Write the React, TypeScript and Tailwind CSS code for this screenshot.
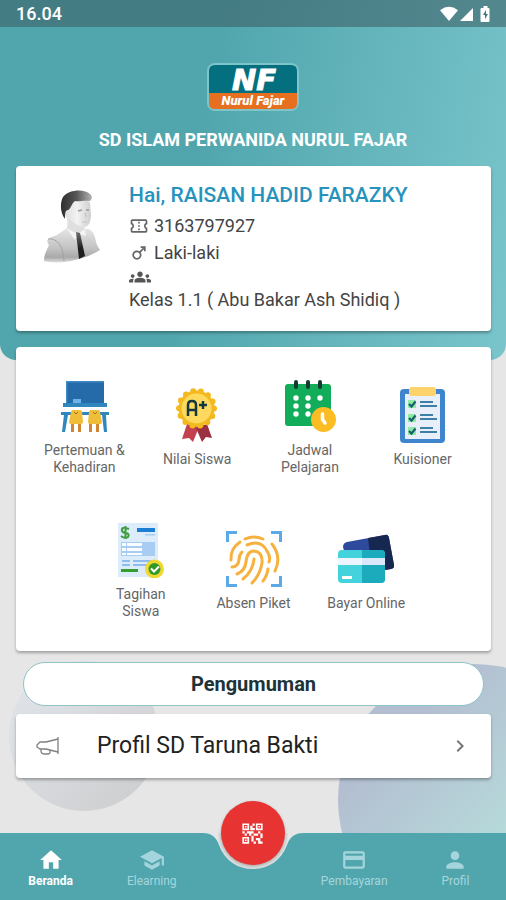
import type { ReactNode } from 'react'
import {
  MdChevronRight,
  MdGroups,
  MdHome,
  MdMale,
  MdOutlineConfirmationNumber,
  MdPayment,
  MdPerson,
  MdQrCode2,
  MdSchool,
} from 'react-icons/md'

function StatusBar() {
  return (
    <div className="h-[27px] bg-[#3b5a60]/55 px-4 flex items-center justify-between text-white">
      <span className="text-lg leading-none font-medium">16.04</span>
      <svg className="w-[52px] h-[18px]" viewBox="0 0 52 18" fill="currentColor" aria-hidden="true">
        <path d="M2 5.200Q11 -1.500 20 5.200L11 16Z" />
        <path d="M35 3V16H22Z" />
        <path d="M43.500 3h2V1h4v2h1q1 0 1 1v12q0 1-1 1h-7q-1 0-1-1V4q0-1 1-1Z" />
        <path d="m48 5-3 5h2v4l3-5h-2Z" fill="#3f777d" />
      </svg>
    </div>
  )
}

function SchoolLogo() {
  return (
    <svg className="w-[92px] h-12" viewBox="0 0 92 48" role="img" aria-label="Logo Nurul Fajar">
      <rect x="0" y="0" width="92" height="48" rx="8" fill="#7fc4c9" />
      <path d="M2 30V8Q2 2 8 2H84Q90 2 90 8V30Z" fill="#04707f" />
      <path d="M2 30H90V40Q90 46 84 46H8Q2 46 2 40Z" fill="#e6701f" />
      <text
        x="47"
        y="27"
        textAnchor="middle"
        className="font-['DejaVu_Sans'] font-bold italic text-[29px]"
        fill="#fff"
        stroke="#fff"
        strokeWidth="1"
      >
        NF
      </text>
      <text x="46" y="42" textAnchor="middle" className="font-black italic text-[13px]" fill="#fff">
        Nurul Fajar
      </text>
    </svg>
  )
}

function Avatar() {
  return (
    <svg className="w-[60px] h-[78px] shrink-0" viewBox="0 0 60 78" role="img" aria-label="Foto siswa">
      <defs>
        <linearGradient id="shirt" x1="0" y1="0" x2="0" y2="1">
          <stop offset="0" stopColor="#e6e6e6" />
          <stop offset=".6" stopColor="#c2c2c2" />
          <stop offset=".85" stopColor="#a9a9a9" />
          <stop offset="1" stopColor="#dedede" />
        </linearGradient>
        <linearGradient id="hair" x1="0" y1="0" x2="1" y2="0">
          <stop offset="0" stopColor="#2e2e2e" />
          <stop offset=".5" stopColor="#565656" />
          <stop offset="1" stopColor="#b4b4b4" />
        </linearGradient>
        <linearGradient id="skin" x1="0" y1="0" x2="1" y2="0">
          <stop offset="0" stopColor="#dcdcdc" />
          <stop offset=".5" stopColor="#f2f2f2" />
          <stop offset="1" stopColor="#cecece" />
        </linearGradient>
        <linearGradient id="tie" x1="0" y1="0" x2="0" y2="1">
          <stop offset="0" stopColor="#707070" />
          <stop offset=".6" stopColor="#1f1f1f" />
        </linearGradient>
      </defs>
      <path d="M2 73C2 66 5 62 7 57C2 51 9 49 15 47L25 40L46 41C53 43 53 51 55 57L58 62C47 69 22 78 2 73Z" fill="url(#shirt)" />
      <path d="M6 51C14 50 21 56 22 73" fill="none" stroke="#a2a2a2" strokeWidth="1" />
      <path d="M24 26C26 34 26 38 24 42L35 48L43 42L41 30Z" fill="#dfdfdf" />
      <path d="M22 21C24 10 45 8 48 15L49 27C49 34 46 39 43 39C35 39 29 32 26 30C22 29 21 24 22 21Z" fill="url(#skin)" />
      <path d="M23 31C18 25 18 14 21 9C27 1 43 1 48 6C51 9 50 11 48 13C42 12 37 14 33 13C29 16 29 21 26 22C23 22 23 26 23 31Z" fill="url(#hair)" />
      <path d="M36 23L40 22M44 22L47 22" stroke="#9a9a9a" strokeWidth="1.500" />
      <path d="M43 25L44 29M40 34L45 34" stroke="#c0c0c0" strokeWidth="1" />
      <path d="M24 40L36 46L33 52ZM36 46L43 41L44 48Z" fill="#f4f4f4" />
      <path d="M34 44L38 45L43 68L37 71Z" fill="url(#tie)" />
    </svg>
  )
}

function ClassroomIcon() {
  return (
    <svg className="size-14" viewBox="0 0 56 56" aria-hidden="true">
      <path d="M10 3H48V26H10Z" fill="#266ba9" />
      <path d="M10 3H48V4.500H11.500V26H10Z" fill="#3f89c5" />
      <path d="M17 21h8v5h-8Z" fill="#6eb2e8" />
      <path d="M7 25H51V29H7Z" fill="#2f87be" />
      <path d="M5 34H53V37H50L51 54H48L46 37H12L9 54H6L8 37H5Z" fill="#2f87be" />
      <path d="M15 43H18V54H15ZM22 43H25V54H22ZM33 43H36V54H33ZM40 43H43V54H40Z" fill="#cf8734" />
      <path d="M15 34Q15 32 17 32H24Q26 32 26 34L27 44Q27 46 25 46H15Q13 46 13 44ZM33 34Q33 32 35 32H42Q44 32 44 34L46 44Q46 46 44 46H34Q32 46 32 44Z" fill="#f0bd38" />
      <path d="m18 34 2 2 2-2M37 34l2 2 2-2" stroke="#9c7624" fill="none" />
    </svg>
  )
}

function GradeIcon() {
  return (
    <svg className="size-14" viewBox="0 0 56 56" aria-hidden="true">
      <path d="m18 37-5 15 7-1 4 4 6-15Z" fill="#c3414f" />
      <path d="m38 37 5 14-6-1-4 5-6-14Z" fill="#9d2f42" />
      <circle cx="27.500" cy="21.500" r="18" fill="#f4b91f" />
      <circle
        cx="27.500"
        cy="21.500"
        r="17.500"
        fill="none"
        stroke="#f4b91f"
        strokeWidth="6"
        strokeDasharray="0 7.854"
        strokeLinecap="round"
      />
      <circle cx="27.500" cy="21.500" r="15" fill="#fdd95e" />
      <path d="M19 29V18Q19 14 23 14T27 18V29M19 23H27M34 14V22M30 18H38" fill="none" stroke="#15383f" strokeWidth="2.500" />
    </svg>
  )
}

function ScheduleIcon() {
  return (
    <svg className="size-14" viewBox="0 0 56 56" aria-hidden="true">
      <rect x="3" y="6" width="46" height="42" rx="3" fill="#12ad5a" />
      <path d="M14 4V9M26 4V9M38 4V9" stroke="#173a30" strokeWidth="4" strokeLinecap="round" />
      <g fill="#fff">
        <circle cx="14" cy="20" r="2.700" />
        <circle cx="26" cy="20" r="2.700" />
        <circle cx="38" cy="20" r="2.700" />
        <circle cx="14" cy="28" r="2.700" />
        <circle cx="26" cy="28" r="2.700" />
        <circle cx="14" cy="36" r="2.700" />
        <circle cx="26" cy="36" r="2.700" />
      </g>
      <circle cx="41.500" cy="41.500" r="12.500" fill="#fbbd24" />
      <path d="M40.500 36V41.500L43 45" fill="none" stroke="#fff" strokeWidth="3.500" strokeLinecap="round" />
    </svg>
  )
}

function SurveyIcon() {
  return (
    <svg className="size-14" viewBox="0 0 56 56" aria-hidden="true">
      <rect x="5" y="2" width="45" height="54" rx="4" fill="#3e85cd" />
      <path d="M10 7H45V52H10Z" fill="#e8eff8" />
      <rect x="14" y="0" width="27" height="9" rx="3" fill="#ffd36c" />
      <path d="M13 13H21V21H13ZM13 27H21V35H13ZM13 40H21V48H13Z" fill="#8eeaa5" />
      <path d="m14 17 2.500 2.500 4-5M14 31l2.500 2.500 4-5M14 44l2.500 2.500 4-5" fill="none" stroke="#17606e" strokeWidth="2.200" />
      <path d="M25 15H38M25 28H38M25 41H38M25 19H42M25 32H42M25 45H42" stroke="#3c80a6" strokeWidth="2" />
    </svg>
  )
}

function BillIcon() {
  return (
    <svg className="size-14" viewBox="0 0 56 56" aria-hidden="true">
      <path d="M5 1H45V55H5Z" fill="#dcecfb" />
      <path d="M16 7Q8 4 9 9Q10 11 13 11Q17 12 15 15Q12 17 8 14M12.500 4V17" fill="none" stroke="#3f9c3d" strokeWidth="2" />
      <path d="M24 6H42V10H24Z" fill="#1d7ed6" />
      <path d="M32 12h10v1.500H32Z" fill="#a8cdf0" />
      <path d="M8 20H42V34H8Z" fill="#a9cdf2" />
      <path d="M9 21H13V24H9ZM14 21H29V24H14ZM9 26H13V29H9ZM14 26H29V29H14ZM9 31H13V33H9ZM14 31H29V33H14Z" fill="#fafcff" />
      <path d="M9 38H17V40H9ZM20 38H41V40H20ZM9 42H17V44H9ZM20 42H36V44H20Z" fill="#8dbdee" />
      <path d="M8 47H25V50H8Z" fill="#35a02f" />
      <circle cx="41.500" cy="47" r="9.500" fill="#f0d832" />
      <circle cx="41.500" cy="47" r="6" fill="#319a27" />
      <path d="m38 46.500 3 3 5-5" fill="none" stroke="#fff" strokeWidth="2" />
    </svg>
  )
}

function FingerprintIcon() {
  return (
    <svg className="size-14" viewBox="0 0 56 56" fill="none" aria-hidden="true">
      <path d="M1.500 11V1.500H11M45 1.500H54.500V11M1.500 45V54.500H11M45 54.500H54.500V45" stroke="#5ca9e8" strokeWidth="3" />
      <g stroke="#f6b13e" strokeWidth="3" strokeLinecap="round">
        <path d="M19 8Q28 4 37 8" />
        <path d="M46 13Q56 26 49 40" />
        <path d="M14 11Q4 18 5 29" />
        <path d="M21 14Q35 8 41 20Q45 26 43 31" />
        <path d="M16 21Q13 24 13 29Q12 36 6 36" />
        <path d="M42 38Q41 45 37 50" />
        <path d="M11 43Q19 40 20 31Q21 20 28 20Q37 21 36 32Q34 44 26 52" />
        <path d="M17 48Q27 40 28 28" />
      </g>
    </svg>
  )
}

function CardsIcon() {
  return (
    <svg className="size-14" viewBox="0 0 56 56" aria-hidden="true">
      <path d="M5 16Q5 12 9 11L47 4Q50 3 51 7L56 34Q57 37 53 38L13 45Z" fill="#2d4a9c" />
      <path d="m30 7 17-3q3-1 4 3l5 27q1 3-3 4l-19 3Z" fill="#16284f" />
      <rect x="0" y="19" width="47" height="33" rx="4" fill="#44d2dc" />
      <path d="M24 19H43Q47 19 47 23V48Q47 52 43 52H24Z" fill="#1caabd" />
      <path d="M0 27H47V34H0Z" fill="#eef5ff" />
      <path d="M24 27H47V34H24Z" fill="#dbe7fa" />
      <path d="M4 45h10v3H4Z" fill="#fff" />
    </svg>
  )
}

function MegaphoneIcon() {
  return (
    <svg className="w-6 h-5" viewBox="0 0 24 20" fill="none" stroke="#808080" strokeWidth="1.300" aria-hidden="true">
      <path d="M22 1V18M22 3L10 6H4L1 9V11L4 13H10L22 16" />
      <path d="M5 13V15Q5 18 9 18H12Q14 18 14 16V14" />
    </svg>
  )
}

interface MenuItem {
  label: string
  icon: ReactNode
}

const menuItems: MenuItem[] = [
  { label: 'Pertemuan & Kehadiran', icon: <ClassroomIcon /> },
  { label: 'Nilai Siswa', icon: <GradeIcon /> },
  { label: 'Jadwal Pelajaran', icon: <ScheduleIcon /> },
  { label: 'Kuisioner', icon: <SurveyIcon /> },
  { label: 'Tagihan Siswa', icon: <BillIcon /> },
  { label: 'Absen Piket', icon: <FingerprintIcon /> },
  { label: 'Bayar Online', icon: <CardsIcon /> },
]

function NavTab({ label, icon, active }: { label: string; icon: ReactNode; active?: boolean }) {
  return (
    <a
      href="#"
      aria-current={active ? 'page' : undefined}
      className={`flex flex-col items-center pt-[14px] text-xs leading-4 ${
        active ? 'text-white font-bold' : 'text-[#a5d5dc]'
      }`}
    >
      {icon}
      <span>{label}</span>
    </a>
  )
}

function BottomNav() {
  return (
    <nav className="relative mt-auto h-[67px]">
      <div className="absolute inset-0 flex">
        <div className="flex-1 bg-[#51a6ad]" />
        <svg className="w-[108px] h-[67px]" viewBox="0 0 108 67" aria-hidden="true">
          <path d="M19 0A35 36 0 0 0 89 0Z" fill="#d8dbdb" />
          <path d="M0 0H4Q16 0 20 12C26 28 39 36 54 36S82 28 88 12Q92 0 104 0H108V67H0Z" fill="#51a6ad" />
        </svg>
        <div className="flex-1 bg-[#51a6ad]" />
      </div>
      <div className="relative grid grid-cols-5 h-full">
        <NavTab label="Beranda" icon={<MdHome className="size-[26px]" />} active />
        <NavTab label="Elearning" icon={<MdSchool className="size-[26px]" />} />
        <div className="flex justify-center">
          <button
            aria-label="Scan QR"
            className="-mt-8 size-16 rounded-full bg-[#e73331] text-white flex items-center justify-center shadow-[0_1px_3px_rgba(0,0,0,0.25)]"
          >
            <MdQrCode2 className="size-[27px]" />
          </button>
        </div>
        <NavTab label="Pembayaran" icon={<MdPayment className="size-[26px]" />} />
        <NavTab label="Profil" icon={<MdPerson className="size-[26px]" />} />
      </div>
    </nav>
  )
}

export default function App() {
  return (
    <div className="relative isolate min-h-screen overflow-hidden bg-[#e6e6e6] flex flex-col font-[Roboto,sans-serif]">
      <div className="absolute -z-10 left-[9px] bottom-[89px] size-[150px] rounded-full bg-linear-to-br from-[#e2e6ec] to-[#cbcccd]" />
      <div className="absolute -z-10 -right-[104px] -bottom-9 size-[272px] rounded-full bg-linear-to-br from-[#b3bfd1] from-25% to-[#b6dcdb] to-65%" />

      <header className="bg-linear-[100deg] from-[#51a6ad] from-40% to-[#7ac5cc] rounded-b-2xl pb-[29px]">
        <StatusBar />
        <div className="pt-9 flex flex-col items-center">
          <SchoolLogo />
          <h1 className="mt-[17px] text-lg leading-6 font-bold text-white">SD ISLAM PERWANIDA NURUL FAJAR</h1>
        </div>
        <section className="mt-[14px] ml-4 mr-[15px] h-[165px] rounded bg-white shadow-[0_2px_3px_rgba(0,0,0,0.3)] flex pl-[26px] pt-[22px] text-[#444]">
          <Avatar />
          <div className="ml-[27px] -mt-1 text-lg leading-[27px]">
            <h2 className="mb-1.5 text-[21px] leading-[22px] font-medium text-[#2793bd]">Hai, RAISAN HADID FARAZKY</h2>
            <p className="flex items-center gap-[5px]">
              <MdOutlineConfirmationNumber className="size-5 text-[#666]" />
              3163797927
            </p>
            <p className="flex items-center gap-[5px]">
              <MdMale className="size-5 text-[#666]" />
              Laki-laki
            </p>
            <MdGroups className="size-[22px] text-[#555]" />
            <p className="leading-6">Kelas 1.1 ( Abu Bakar Ash Shidiq )</p>
          </div>
        </section>
      </header>

      <main className="pl-4 pr-[15px] pb-12">
        <section className="-mt-[13px] p-2 rounded bg-white shadow-[0_2px_3px_rgba(0,0,0,0.3)]">
          <ul className="px-1 flex flex-wrap justify-center">
            {menuItems.map((item) => (
              <li key={item.label} className="w-1/4 h-36">
                <button className="w-full h-full px-3 flex flex-col items-center justify-center gap-2 text-sm leading-[17px] text-[#666] cursor-pointer">
                  {item.icon}
                  <span>{item.label}</span>
                </button>
              </li>
            ))}
          </ul>
        </section>

        <h2 className="mt-[11px] mx-[7px] h-11 rounded-full border border-[#8fc4c6] bg-white flex items-center justify-center text-xl font-bold text-[#1d3338]">
          Pengumuman
        </h2>

        <a
          href="#"
          className="mt-2 h-16 pl-5 pr-[19px] rounded bg-white shadow-[0_2px_3px_rgba(0,0,0,0.3)] flex items-center text-[#222]"
        >
          <MegaphoneIcon />
          <span className="ml-[37px] flex-1 text-[23px]">Profil SD Taruna Bakti</span>
          <MdChevronRight className="size-6 text-[#777]" />
        </a>
      </main>

      <BottomNav />
    </div>
  )
}
